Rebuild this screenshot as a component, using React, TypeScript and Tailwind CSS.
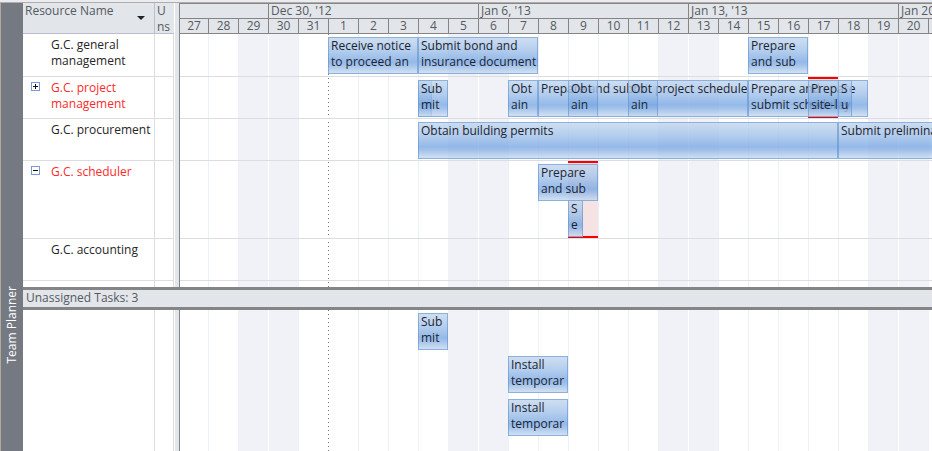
const DAY = 30;
const LEAD = 28;

const bar =
  "absolute block overflow-hidden whitespace-pre border border-[#5f93d199] bg-[linear-gradient(to_bottom,#c2d6edcc_0%,#a2c2e9cc_35%,#7aa8e3cc_68%,#8db4e6cc_78%,#c6d9efcc_100%)] pl-[2px] text-left text-xs leading-4 text-[#1c2430]";

const days = [
  27, 28, 29, 30, 31, 1, 2, 3, 4, 5, 6, 7, 8, 9, 10, 11, 12, 13, 14, 15, 16, 17,
  18, 19, 20, 21, 22, 23, 24, 25, 26, 27, 28, 29, 30, 31,
];
const weeks = ["Dec 30, '12", "Jan 6, '13", "Jan 13, '13", "Jan 20, '13", "Jan 27, '13"];

type Task = { start: number; span: number; text: string; top?: number };
type Resource = {
  name: string;
  over?: boolean;
  toggle?: "+" | "-";
  height: string;
  tasks: Task[];
  overload?: { start: number; span: number };
};

// Starts and spans are counted in days; day 0 is December 28.
const resources: Resource[] = [
  {
    name: "G.C. general management",
    height: "h-[43px]",
    tasks: [
      { start: 4, span: 3, text: "Receive notice\nto proceed an" },
      { start: 7, span: 4, text: "Submit bond and\ninsurance document" },
      { start: 18, span: 2, text: "Prepare\nand sub" },
    ],
  },
  {
    name: "G.C. project management",
    over: true,
    toggle: "+",
    height: "h-[42px]",
    overload: { start: 20, span: 1 },
    tasks: [
      { start: 7, span: 0.45, text: "S\nu" },
      { start: 7, span: 1, text: "Sub\nmit" },
      { start: 10, span: 1, text: "Obt\nain" },
      { start: 11, span: 7, text: "Prepare and submit project schedule" },
      { start: 12, span: 1, text: "Obt\nain" },
      { start: 14, span: 1, text: "Obt\nain" },
      { start: 18, span: 3, text: "Prepare and\nsubmit schedule" },
      { start: 20, span: 2, text: "Prepare\nsite-lay" },
      { start: 21, span: 0.45, text: "S\nu" },
    ],
  },
  {
    name: "G.C. procurement",
    height: "h-[42px]",
    tasks: [
      { start: 7, span: 14, text: "Obtain building permits" },
      { start: 21, span: 5, text: "Submit preliminary" },
    ],
  },
  {
    name: "G.C. scheduler",
    over: true,
    toggle: "-",
    height: "h-[78px]",
    overload: { start: 12, span: 1 },
    tasks: [
      { start: 11, span: 2, text: "Prepare\nand sub" },
      { start: 12, span: 0.5, text: "S\ne", top: 39 },
    ],
  },
  { name: "G.C. accounting", height: "h-[42px]", tasks: [] },
];

const unassigned: Task[] = [
  { start: 7, span: 1, text: "Sub\nmit", top: 3 },
  { start: 10, span: 2, text: "Install\ntemporar", top: 46 },
  { start: 10, span: 2, text: "Install\ntemporar", top: 89 },
];

function Bar({ task, top }: { task: Task; top: number }) {
  return (
    <button
      type="button"
      className={bar}
      style={{
        left: LEAD + task.start * DAY,
        width: Math.round(task.span * DAY),
        top,
        height: 37,
      }}
    >
      <span className="block h-full">{task.text}</span>
    </button>
  );
}

function DayGrid() {
  return (
    <div className="absolute inset-0 flex overflow-hidden">
      {days.map((day, i) => (
        <div
          key={i}
          className={`shrink-0 ${i === 0 ? "w-7" : "w-[30px] border-l"} ${
            i % 7 === 2
              ? "border-[#f0f2f8] bg-[#f0f2f8]"
              : i % 7 === 3
                ? "border-white bg-[#f0f2f8]"
                : "border-[#ebf1fa]"
          }`}
        />
      ))}
      <div
        className="absolute inset-y-0 w-px bg-[repeating-linear-gradient(to_bottom,#77777d_0px,#77777d_1px,#ffffff_1px,#ffffff_4px)]"
        style={{ left: LEAD + 4 * DAY }}
      />
    </div>
  );
}

function SideCells({ children }: { children?: React.ReactNode }) {
  return (
    <>
      <div className="flex w-[132px] shrink-0 border-r border-[#dcdde1]">{children}</div>
      <div className="w-[19px] shrink-0 border-r border-[#dcdde1]" />
    </>
  );
}

function Splitter() {
  return <div className="w-[6px] shrink-0 border-r border-l border-l-white border-r-[#858585] bg-[#e2e5ea]" />;
}

export default function App() {
  return (
    <div className="flex h-screen flex-col overflow-hidden bg-white font-['Open_Sans','Noto_Sans',sans-serif] text-xs leading-4 text-[#262626]">
      <div className="h-[3px] shrink-0 border-b border-[#b5ad9f] bg-[#e9ecf5]" />
      <div className="flex min-h-0 flex-1">
        <aside className="flex w-[23px] shrink-0 items-center justify-center border-l border-[#b0a99c] bg-[#757982] pt-[196px]">
          <span className="rotate-180 text-white [writing-mode:vertical-rl]">Team Planner</span>
        </aside>
        <main className="flex min-w-0 flex-1 flex-col">
          <header className="flex h-[31px] shrink-0 text-[#555a60]">
            <div className="flex w-[132px] shrink-0 justify-between border-r border-b border-[#b9bfd3] bg-[#e2e5ea] pl-[2px]">
              <span>Resource Name</span>
              <button type="button" aria-label="Sort resources" className="mt-[13px] mr-[9px] h-1 w-2">
                <svg viewBox="0 0 8 4" className="block h-1 w-2" fill="#222">
                  <path d="M0 0H8L4 4Z" />
                </svg>
              </button>
            </div>
            <div className="w-[19px] shrink-0 border-b border-[#b9bfd3] bg-[#e2e5ea] pl-[2px]">
              U<br />ns
            </div>
            <Splitter />
            <div className="flex min-w-0 flex-1 flex-col overflow-hidden border-t border-[#858585] bg-[#e2e5ea]">
              <div className="flex h-[15px] shrink-0 border-b border-[#858585]">
                <div className="w-[88px] shrink-0" />
                {weeks.map((week) => (
                  <div key={week} className="w-[210px] shrink-0 border-l border-[#858585] pl-[2px] leading-[14px]">
                    {week}
                  </div>
                ))}
              </div>
              <div className="flex h-[15px] shrink-0 border-b border-[#858585] text-center leading-[14px]">
                {days.map((day, i) => (
                  <div key={i} className={`shrink-0 ${i === 0 ? "w-7" : "w-[30px] border-l border-[#858585]"}`}>
                    {day}
                  </div>
                ))}
              </div>
            </div>
          </header>

          <section className="flex h-[253px] shrink-0">
            <div className="flex w-[151px] shrink-0 flex-col">
              {resources.map((r) => (
                <div key={r.name} className={`flex shrink-0 border-b border-[#dcdde1] ${r.height}`}>
                  <SideCells>
                    <div className="w-7 shrink-0 pt-[5px] pl-2">
                      {r.toggle && (
                        <button
                          type="button"
                          aria-label={r.toggle === "+" ? "Expand" : "Collapse"}
                          className="block size-[9px] border border-[#7d98df] bg-white"
                        >
                          <svg viewBox="0 0 7 7" className="block size-[7px]" fill="#111">
                            <path d={r.toggle === "+" ? "M1 3H3V1H4V3H6V4H4V6H3V4H1Z" : "M1 3H6V4H1Z"} />
                          </svg>
                        </button>
                      )}
                    </div>
                    <div className={`pt-[3px] ${r.over ? "text-[#ff2a2a]" : ""}`}>{r.name}</div>
                  </SideCells>
                </div>
              ))}
              <div className="flex flex-1">
                <SideCells />
              </div>
            </div>
            <Splitter />
            <div className="relative min-w-0 flex-1 overflow-hidden">
              <DayGrid />
              {resources.map((r) => (
                <div key={r.name} className={`relative border-b border-[#dcdde1] ${r.height}`}>
                  {r.overload && (
                    <div
                      className="absolute inset-y-0 border-y-2 border-[#f90000] bg-[#f5e3e3]"
                      style={{ left: LEAD + r.overload.start * DAY, width: r.overload.span * DAY }}
                    />
                  )}
                  {r.tasks.map((task, n) => (
                    <Bar key={n} task={task} top={task.top ?? 3} />
                  ))}
                </div>
              ))}
            </div>
          </section>

          <h2 className="h-[23px] shrink-0 border-y-[3px] border-[#858585] bg-[#e2e5ea] pl-[3px] text-[#555a60]">
            Unassigned Tasks: 3
          </h2>

          <section className="flex min-h-0 flex-1">
            <SideCells />
            <Splitter />
            <div className="relative min-w-0 flex-1 overflow-hidden">
              <DayGrid />
              {unassigned.map((task, n) => (
                <Bar key={n} task={task} top={task.top ?? 3} />
              ))}
            </div>
          </section>
        </main>
      </div>
    </div>
  );
}
